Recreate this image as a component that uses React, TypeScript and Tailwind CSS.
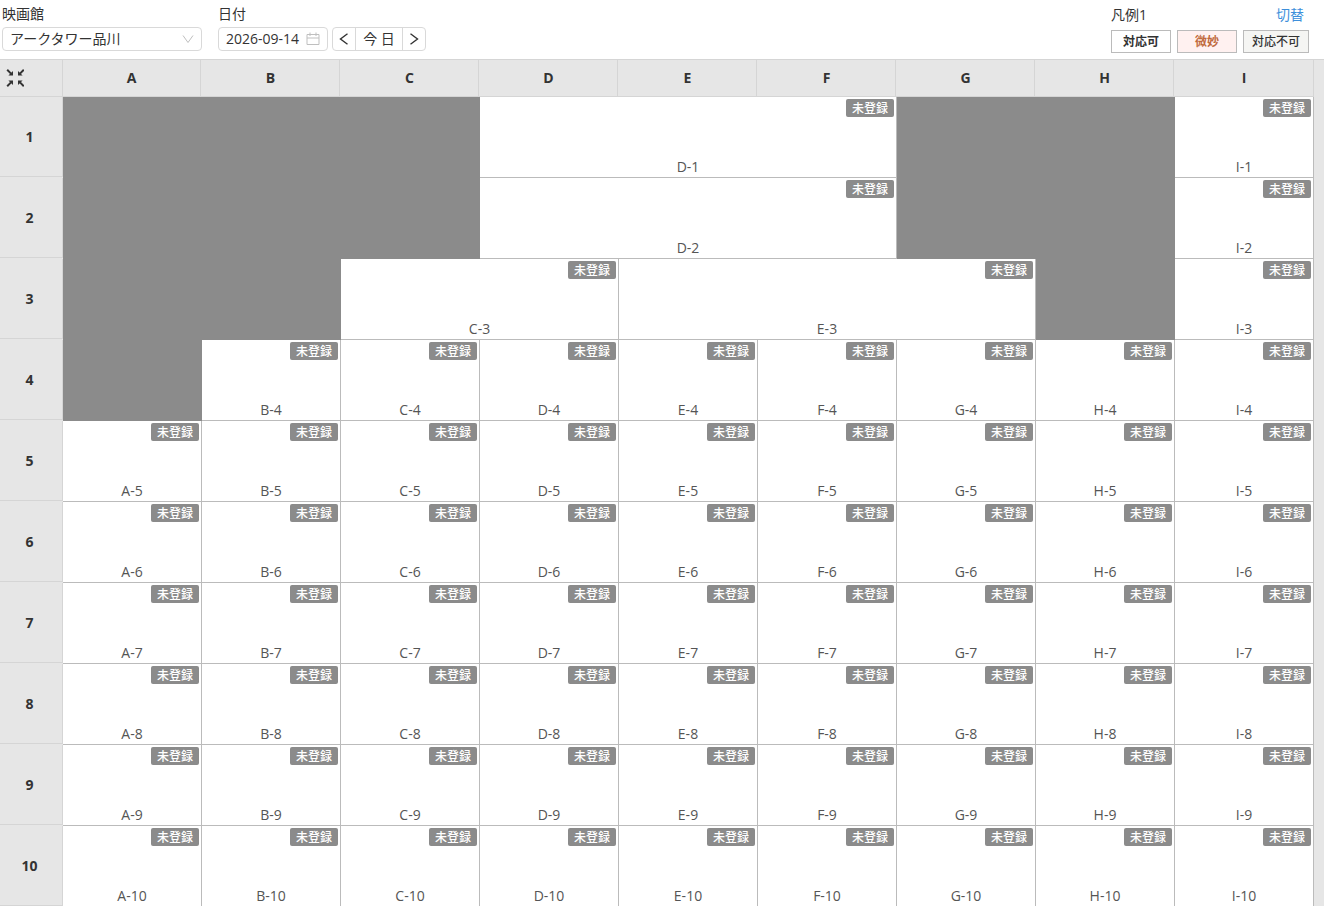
import React, { useState } from "react";

const COLUMNS = ["A", "B", "C", "D", "E", "F", "G", "H", "I"];

type Cell = { label?: string; span: number };

const UPPER_ROWS: Cell[][] = [
  [{ span: 3 }, { label: "D-1", span: 3 }, { span: 2 }, { label: "I-1", span: 1 }],
  [{ span: 3 }, { label: "D-2", span: 3 }, { span: 2 }, { label: "I-2", span: 1 }],
  [
    { span: 2 },
    { label: "C-3", span: 2 },
    { label: "E-3", span: 3 },
    { span: 1 },
    { label: "I-3", span: 1 },
  ],
  [{ span: 1 }, ...COLUMNS.slice(1).map((c) => ({ label: `${c}-4`, span: 1 }))],
];

const ROWS: Cell[][] = [
  ...UPPER_ROWS,
  ...[5, 6, 7, 8, 9, 10].map((n) => COLUMNS.map((c) => ({ label: `${c}-${n}`, span: 1 }))),
];

function CollapseIcon() {
  return (
    <svg viewBox="0 0 18 18" className="size-[18px]" fill="#333" stroke="#333" strokeWidth="2">
      <path d="M1.2 0.8 5 4.6M17.8 0.8 14 4.6M1.2 17.2 5 13.4M17.8 17.2 14 13.4" />
      <path
        stroke="none"
        d="M7 2V6.6H2.4ZM12 2V6.6H16.6ZM7 16V11.4H2.4ZM12 16V11.4H16.6Z"
      />
    </svg>
  );
}

function CalendarIcon() {
  return (
    <svg viewBox="0 0 14 14" className="pointer-events-none size-[14px] shrink-0" fill="none" stroke="#bfbfbf">
      <path d="M1 2.5H13V12.5H1ZM1 6H13M4 0.5V4M10 0.5V4" />
    </svg>
  );
}

function Chevron({ d, className }: { d: string; className: string }) {
  return (
    <svg viewBox="0 0 12 12" className={className} fill="none" stroke="currentColor">
      <path d={d} />
    </svg>
  );
}

function Toolbar() {
  const [date, setDate] = useState("2026-09-14");
  return (
    <header className="flex shrink-0 items-start justify-between pr-[15px] pl-[2px]">
      <div className="flex items-end gap-4 pt-[3px] pb-2">
        <div className="flex flex-col gap-[2px]">
          <label htmlFor="theater" className="leading-[22px]">
            映画館
          </label>
          <div className="grid w-[200px] items-center">
            <select
              id="theater"
              className="col-start-1 row-start-1 h-6 w-full appearance-none rounded border border-[#d9d9d9] bg-white px-[7px] leading-[22px]"
            >
              <option>アークタワー品川</option>
            </select>
            <Chevron
              d="M1 2.5 6 9.5 11 2.5"
              className="pointer-events-none col-start-1 row-start-1 mr-2 size-3 justify-self-end text-[#bfbfbf]"
            />
          </div>
        </div>
        <div className="flex flex-col gap-[2px]">
          <label htmlFor="date" className="leading-[22px]">
            日付
          </label>
          <div className="flex gap-1">
            <div className="flex h-6 w-[110px] items-center rounded border border-[#d9d9d9] bg-white px-[7px]">
              <input
                id="date"
                value={date}
                onChange={(e) => setDate(e.target.value)}
                className="w-full min-w-0 flex-1 bg-transparent outline-none"
              />
              <CalendarIcon />
            </div>
            <div className="flex h-6 divide-x divide-[#d9d9d9] rounded border border-[#d9d9d9] bg-white">
              <button type="button" aria-label="前日" className="flex w-[23px] items-center justify-center">
                <Chevron d="M9.5 0.8 2.5 6 9.5 11.2" className="size-3 stroke-[1.4]" />
              </button>
              <button type="button" className="w-[47px] text-center leading-[22px]">
                今 日
              </button>
              <button type="button" aria-label="翌日" className="flex w-[22px] items-center justify-center">
                <Chevron d="M2.5 0.8 9.5 6 2.5 11.2" className="size-3 stroke-[1.4]" />
              </button>
            </div>
          </div>
        </div>
      </div>
      <div className="flex flex-col gap-1 pt-1">
        <div className="flex justify-between pr-[5px] leading-[22px]">
          <span>凡例1</span>
          <a href="#legend" className="text-[#3d8fdb]">
            切替
          </a>
        </div>
        <ul className="flex gap-[6px] text-center text-xs leading-[21px]">
          <li className="w-[60px] border border-[#bbb] bg-white font-bold">対応可</li>
          <li className="w-[60px] border border-[#bbb] bg-[#fff1f0] font-bold text-[#c0693c]">微妙</li>
          <li className="w-[66px] border border-[#bbb] bg-[#f5f5f3] font-medium">対応不可</li>
        </ul>
      </div>
    </header>
  );
}

function AreaCell({ cell }: { cell: Cell }) {
  if (!cell.label) return <td colSpan={cell.span} className="bg-[#8b8b8b]" />;
  return (
    <td colSpan={cell.span} className="border-r border-b border-[#bbb] bg-white p-0">
      <div className="flex h-20 flex-col items-center justify-between pt-[2px]">
        <span className="mr-[2px] h-[18px] w-12 self-end rounded-xs bg-[#8b8b8b] text-center text-xs leading-5 font-medium text-white">
          未登録
        </span>
        <span className="text-sm leading-5 text-[#555]">{cell.label}</span>
      </div>
    </td>
  );
}

export default function App() {
  return (
    <div className="flex h-screen flex-col overflow-hidden bg-white font-['Open_Sans','Noto_Sans_CJK_JP',sans-serif] text-sm text-[#333]">
      <Toolbar />
      <main className="min-h-0 flex-1 overflow-auto border-t border-[#d5d5d5] bg-[#e6e6e6] pr-[10px] [scrollbar-width:none]">
        <table className="w-full table-fixed border-separate border-spacing-0">
          <thead>
            <tr>
              <th className="w-[63px] p-0">
                <div className="flex h-[37px] items-center border-r border-b border-[#d5d5d5] pl-[6px]">
                  <button type="button" aria-label="縮小">
                    <CollapseIcon />
                  </button>
                </div>
              </th>
              {COLUMNS.map((c) => (
                <th key={c} scope="col" className="group p-0 text-sm">
                  <div className="flex h-[37px] border-b border-[#d5d5d5] pr-px group-last:pr-0">
                    <span className="flex-1 border-r border-[#d5d5d5] leading-9">{c}</span>
                  </div>
                </th>
              ))}
            </tr>
          </thead>
          <tbody>
            {ROWS.map((row, i) => (
              <tr key={i}>
                <th scope="row" className="p-0 pb-px text-sm">
                  <div className="h-20 border-r border-b border-[#d5d5d5] pr-[3px] leading-[80px]">{i + 1}</div>
                </th>
                {row.map((cell, j) => (
                  <AreaCell key={j} cell={cell} />
                ))}
              </tr>
            ))}
          </tbody>
        </table>
      </main>
    </div>
  );
}
